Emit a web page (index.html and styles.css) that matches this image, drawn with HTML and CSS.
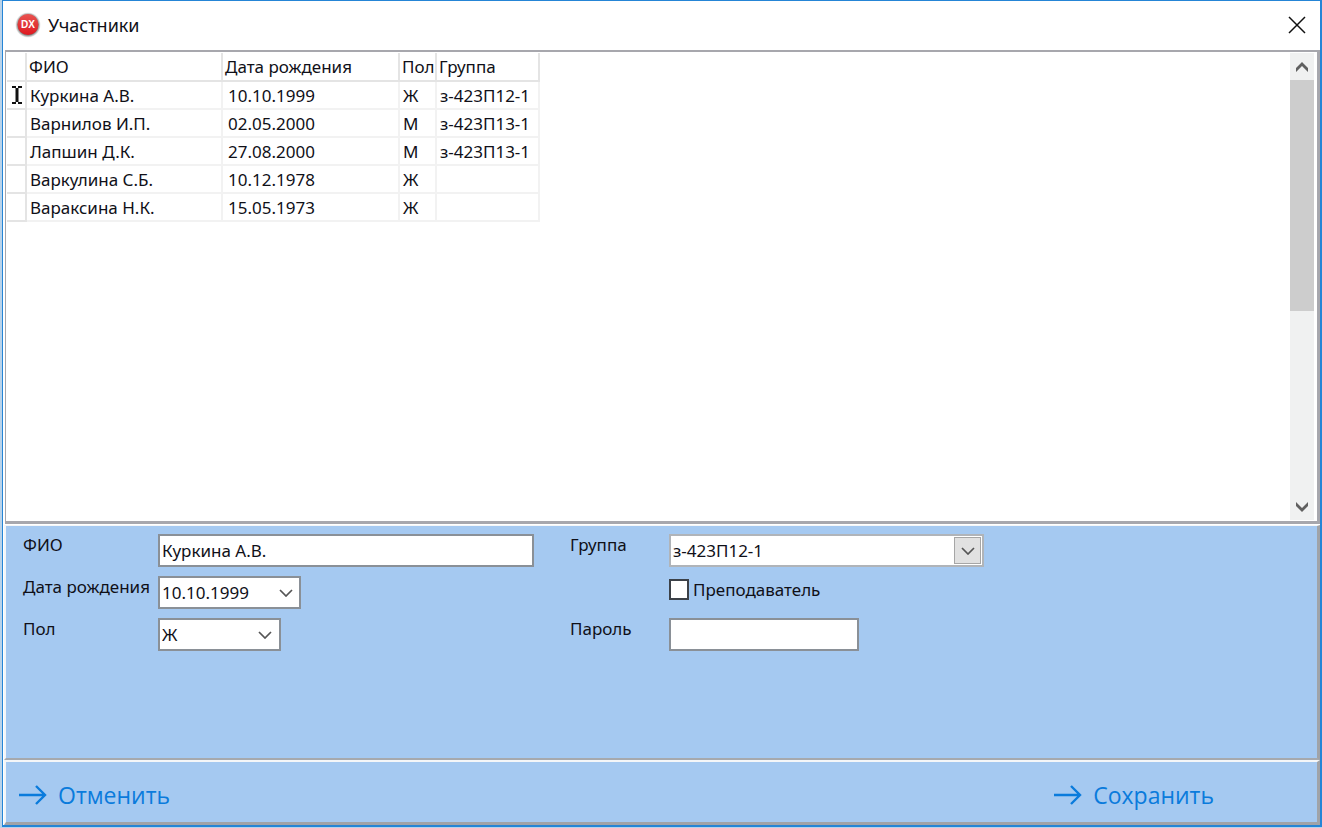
FILE: index.html
```html
<!DOCTYPE html>
<html lang="ru">
<head>
<meta charset="utf-8">
<title>Участники</title>
<meta name="viewport" content="width=device-width, initial-scale=1">
<link rel="stylesheet" href="styles.css">
</head>
<body>
<main class="window">
  <header class="titlebar">
    <svg class="logo" viewBox="0 0 26 26" aria-hidden="true">
      <defs>
        <radialGradient id="rim"><stop offset="0.8" stop-color="#777"/><stop offset="1" stop-color="#aaa" stop-opacity="0.2"/></radialGradient>
        <linearGradient id="red" x2="0" y2="1"><stop offset="0" stop-color="#ea5350"/><stop offset="0.45" stop-color="#e23a3b"/><stop offset="1" stop-color="#e01820"/></linearGradient>
      </defs>
      <circle cx="13" cy="13" r="12.5" fill="url(#rim)"/>
      <circle cx="13" cy="12.5" r="10.5" fill="url(#red)"/>
      <text class="logo-text" x="13" y="16" text-anchor="middle">DX</text>
    </svg>
    <h1 class="title">Участники</h1>
    <button class="close" type="button" aria-label="Закрыть">
      <svg width="18" height="18" viewBox="0 0 18 18" aria-hidden="true"><path d="M1 1L17 17M17 1L1 17" stroke="#111" stroke-width="1.5"/></svg>
    </button>
  </header>

  <section class="list">
    <div class="list-body">
      <table class="grid">
        <colgroup><col class="c-mark"><col class="c-name"><col class="c-date"><col class="c-sex"><col class="c-group"></colgroup>
        <thead>
          <tr><th></th><th>ФИО</th><th>Дата рождения</th><th>Пол</th><th>Группа</th></tr>
        </thead>
        <tbody>
          <tr><td class="mark"><svg width="10" height="18" viewBox="0 0 10 18" aria-hidden="true"><path d="M0 1H4M6 1H10M0 17H4M6 17H10" stroke="#111" stroke-width="2"/><path d="M5 2V16" stroke="#111" stroke-width="3"/></svg></td><td>Куркина А.В.</td><td class="date">10.10.1999</td><td>Ж</td><td>з-423П12-1</td></tr>
          <tr><td></td><td>Варнилов И.П.</td><td class="date">02.05.2000</td><td>М</td><td>з-423П13-1</td></tr>
          <tr><td></td><td>Лапшин Д.К.</td><td class="date">27.08.2000</td><td>М</td><td>з-423П13-1</td></tr>
          <tr><td></td><td>Варкулина С.Б.</td><td class="date">10.12.1978</td><td>Ж</td><td></td></tr>
          <tr><td></td><td>Вараксина Н.К.</td><td class="date">15.05.1973</td><td>Ж</td><td></td></tr>
        </tbody>
      </table>
    </div>
    <div class="scrollbar">
      <button class="scroll-btn" type="button" aria-label="Вверх"><svg width="12" height="10" viewBox="0 0 12 10" aria-hidden="true"><path d="M0 6L6 0L12 6V10L6 4L0 10Z" fill="#606060"/></svg></button>
      <div class="track"><div class="thumb"></div></div>
      <button class="scroll-btn" type="button" aria-label="Вниз"><svg width="12" height="10" viewBox="0 0 12 10" aria-hidden="true"><path d="M0 0L6 6L12 0V4L6 10L0 4Z" fill="#606060"/></svg></button>
    </div>
  </section>

  <form class="form" id="member">
    <label class="label" for="name">ФИО</label>
    <input class="field w-name" id="name" type="text" value="Куркина А.В.">
    <label class="label" for="group">Группа</label>
    <div class="combo w-group">
      <select class="field field-light" id="group"><option>з-423П12-1</option><option>з-423П13-1</option></select>
      <span class="arrow arrow-box"><svg width="14" height="8" viewBox="0 0 14 8" aria-hidden="true"><path d="M1 1L7 7L13 1" fill="none" stroke="#555" stroke-width="1.7"/></svg></span>
    </div>

    <label class="label" for="birth">Дата рождения</label>
    <div class="field picker">
      <input class="picker-input" id="birth" type="text" value="10.10.1999">
      <button class="picker-btn" type="button" aria-label="Календарь"><svg width="14" height="8" viewBox="0 0 14 8" aria-hidden="true"><path d="M1 1L7 7L13 1" fill="none" stroke="#555" stroke-width="1.7"/></svg></button>
    </div>
    <label class="check"><input class="box" type="checkbox">Преподаватель</label>

    <label class="label" for="sex">Пол</label>
    <div class="combo w-sex">
      <select class="field" id="sex"><option>Ж</option><option>М</option></select>
      <span class="arrow"><svg width="14" height="8" viewBox="0 0 14 8" aria-hidden="true"><path d="M1 1L7 7L13 1" fill="none" stroke="#555" stroke-width="1.7"/></svg></span>
    </div>
    <label class="label" for="pass">Пароль</label>
    <input class="field w-pass" id="pass" type="password">
  </form>

  <footer class="footer">
    <button class="action" type="button"><svg width="28" height="20" viewBox="0 0 28 20" aria-hidden="true"><path d="M0 10H26M17 1L26 10L17 19" fill="none" stroke="#0a7bdc" stroke-width="2.4"/></svg>Отменить</button>
    <button class="action" type="submit" form="member"><svg width="28" height="20" viewBox="0 0 28 20" aria-hidden="true"><path d="M0 10H26M17 1L26 10L17 19" fill="none" stroke="#0a7bdc" stroke-width="2.4"/></svg>Сохранить</button>
  </footer>
</main>
</body>
</html>
```

FILE: styles.css
```css
* { box-sizing: border-box; }

body {
  margin: 0;
  height: 100vh;
  padding: 0 0 1px 2px;
  background: #b9d3ea;
  color: #101018;
  font: 17px/22px "Noto Sans", "Open Sans", sans-serif;
}

button, input, select { font: inherit; color: inherit; }
button { display: flex; align-items: center; justify-content: center; padding: 0; border: 0; background: none; }

.window {
  display: flex;
  flex-direction: column;
  height: 100%;
  border: 2px solid #2585d6;
  border-width: 1px 2px 2px 1px;
  background: #fff;
}

.titlebar { display: flex; align-items: center; flex: 0 0 49px; padding: 0 12px 2px; }
.logo { width: 26px; height: 26px; }
.logo-text { fill: #fff; font: 700 10px "Liberation Sans", sans-serif; }
.title { flex: 1; margin: 0 0 0 7px; font-size: 18px; font-weight: 400; }
.close { width: 22px; height: 22px; }

.list {
  display: flex;
  flex: 1;
  min-height: 200px;
  margin-left: 2px;
  padding: 1px;
  border: 2px solid #a7a7ad;
  border-width: 2px 3px 3px 1px;
}
.list-body { flex: 1; overflow: hidden; }

.grid { border-collapse: collapse; table-layout: fixed; width: 532px; }
.c-mark { width: 19px; }
.c-name { width: 196px; }
.c-date { width: 177px; }
.c-sex { width: 37px; }
.c-group { width: 103px; }
.grid th, .grid td {
  height: 28px;
  padding: 1px 0 0 3px;
  border: 1px solid #f2f2f2;
  border-width: 0 2px 2px 0;
  font-weight: 400;
  line-height: 22px;
  text-align: left;
  white-space: nowrap;
}
.grid th, .grid td:first-child { border-color: #e4e4e4; }
.grid th { padding-left: 2px; }
.grid .mark { padding: 0 0 0 5px; }
.mark svg { display: block; }
.grid .date { padding-left: 5px; }

.scrollbar { display: flex; flex-direction: column; width: 24px; margin-right: 2px; background: #f0f1f1; }
.scroll-btn { height: 27px; }
.track { flex: 1; }
.thumb { height: 56%; background: #cdcdcd; }

.form {
  display: grid;
  grid-template-columns: 135px 412px 99px 1fr;
  grid-auto-rows: 33px;
  row-gap: 9px;
  flex: 0 0 235px;
  margin: 1px 0 0 1px;
  padding: 8px 0 0 17px;
  border: 1px solid #f4f6f8;
  border-width: 1px 0 0 2px;
  border-right: 3px solid #a0a3a8;
  border-bottom: 2px solid #a6a9ae;
  background: #a5c9f1;
}
.label { white-space: nowrap; }
.field {
  width: 100%;
  height: 33px;
  margin: 0;
  padding: 0 2px;
  border: 2px solid #8a9097;
  border-radius: 0;
  outline: 0;
  background: #fff;
  appearance: none;
}
.field-light { border-color: #b0b4b9; }
.w-name { width: 376px; }
.w-group { width: 315px; }
.w-sex { width: 123px; }
.w-pass { width: 190px; }

.combo { position: relative; }
.arrow {
  position: absolute;
  top: 3px;
  right: 3px;
  display: flex;
  align-items: center;
  justify-content: center;
  width: 27px;
  height: 27px;
  pointer-events: none;
}
.arrow-box { border: 1px solid #a6a6a6; background: #e1e1e1; }

.picker { display: flex; width: 143px; padding: 0; }
.picker-input { flex: 1; width: 0; padding: 0 0 0 2px; border: 0; outline: 0; background: none; }
.picker-btn { width: 27px; }

.check { display: flex; grid-column: 4; align-items: center; gap: 4px; height: 27px; }
.box { flex: none; appearance: none; width: 20px; height: 21px; margin: 0; border: 2px solid #3c4148; background: #fff; }

.footer {
  display: flex;
  justify-content: space-between;
  flex: 0 0 65px;
  margin-left: 1px;
  padding: 6px 103px 0 13px;
  border: 2px solid #f4f6f8;
  border-right: 3px solid #a0a3a8;
  border-bottom: 3px solid #a0a3a8;
  background: #a5c9f1;
}
.action { gap: 11px; color: #0a7bdc; font: 23px/32px "Open Sans", "Noto Sans", sans-serif; }
```
